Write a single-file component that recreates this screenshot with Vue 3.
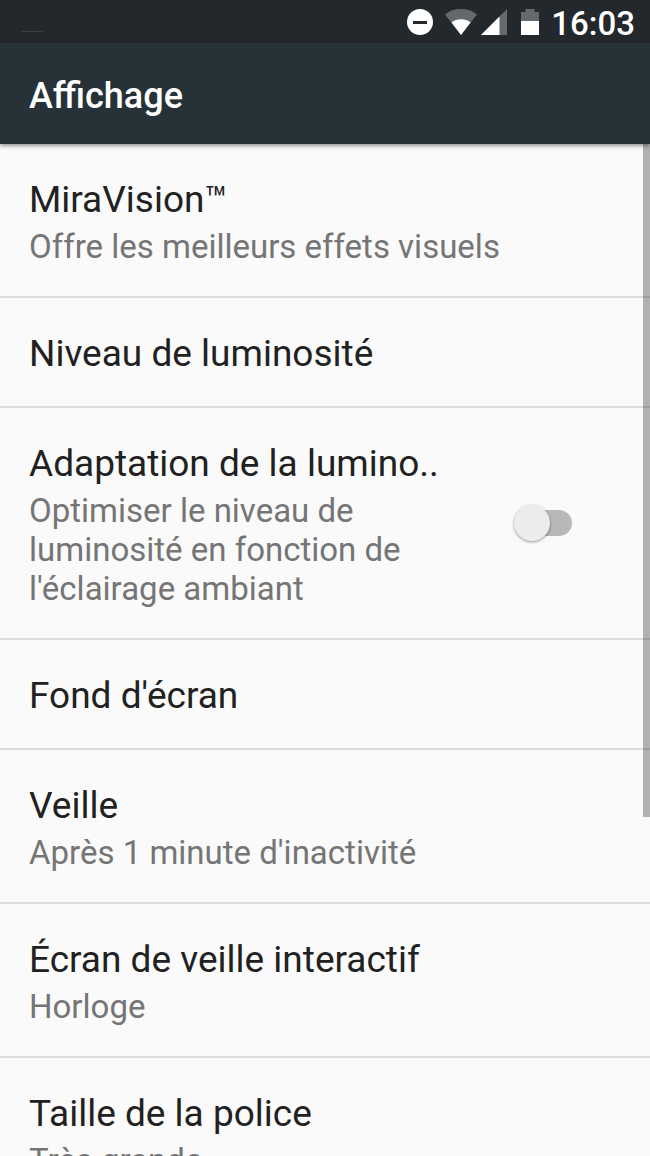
<script setup>
import { ref } from 'vue'

const adaptive = ref(false)

const items = [
  { title: 'MiraVision™', summary: 'Offre les meilleurs effets visuels' },
  { title: 'Niveau de luminosité' },
  {
    title: 'Adaptation de la lumino..',
    summary: "Optimiser le niveau de luminosité en fonction de l'éclairage ambiant",
    toggle: true,
  },
  { title: "Fond d'écran" },
  { title: 'Veille', summary: "Après 1 minute d'inactivité" },
  { title: 'Écran de veille interactif', summary: 'Horloge' },
  { title: 'Taille de la police', summary: 'Très grande' },
]
</script>
<template>
  <div class="screen">
    <div class="status-bar">
      <svg class="notification" viewBox="0 0 22 26">
        <path d="M0 22.500H21V20.500" fill="none" stroke="#3a4043" />
      </svg>
      <svg class="dnd" viewBox="0 0 26 26">
        <circle cx="13" cy="13" r="13" fill="#fff" />
        <rect x="6" y="12" width="14" height="3" fill="#22282c" />
      </svg>
      <svg class="wifi" viewBox="0 0 32 26">
        <path d="M0 5.5C9-1.8 23-1.8 32 5.5L16 26z" fill="#64696c" />
        <path d="M6.5 13.5C11.5 9.3 20.5 9.3 25.5 13.5L16 26z" fill="#fff" />
      </svg>
      <svg class="signal" viewBox="0 0 26 26">
        <path d="M26 0V26H0z" fill="#64696c" />
        <path d="M18.5 7.5V26H0z" fill="#fff" />
      </svg>
      <svg class="battery" viewBox="0 0 18 26">
        <path d="M0 3H4.5V0H13.5V3H18V12H0z" fill="#64696c" />
        <path d="M0 12H18V26H0z" fill="#fff" />
      </svg>
      <span class="clock">16:03</span>
    </div>
    <header class="app-bar">
      <h1>Affichage</h1>
    </header>
    <main class="content">
      <ul>
        <li v-for="item in items" :key="item.title">
          <component :is="item.toggle ? 'label' : 'button'" class="row">
            <span class="text">
              <span class="title">{{ item.title }}</span>
              <span v-if="item.summary" class="summary">{{ item.summary }}</span>
            </span>
            <input v-if="item.toggle" v-model="adaptive" class="switch" type="checkbox" />
          </component>
        </li>
      </ul>
      <div class="scroll-thumb"></div>
    </main>
  </div>
</template>
<style>
body {
  margin: 0;
  background-color: #fafafa;
}
</style>
<style scoped>
.screen {
  display: flex;
  flex-direction: column;
  height: 100vh;
  overflow: hidden;
  background-color: #fafafa;
  font-family: Roboto, sans-serif;
}
.status-bar {
  display: flex;
  flex-shrink: 0;
  align-items: center;
  height: 43px;
  padding: 0 15px 0 22px;
  background-color: #22282c;
}
.status-bar svg {
  height: 26px;
}
.notification {
  width: 22px;
  margin-right: auto;
}
.dnd {
  width: 26px;
  margin-right: 12px;
}
.wifi {
  width: 32px;
  margin-right: 4px;
}
.signal {
  width: 26px;
  margin-right: 14px;
}
.battery {
  width: 18px;
  margin-right: 12px;
}
.clock {
  padding-top: 4px;
  color: #fff;
  font-size: 33px;
  font-weight: 500;
  line-height: 39px;
}
.app-bar {
  z-index: 1;
  display: flex;
  flex-shrink: 0;
  align-items: center;
  height: 101px;
  padding: 0 29px;
  background-color: #263238;
  box-shadow: 0 2px 4px rgba(0, 0, 0, 0.4);
}
h1 {
  margin: 0;
  padding-top: 4px;
  color: #fff;
  font-size: 36px;
  font-weight: 500;
  line-height: 44px;
}
.content {
  position: relative;
  flex: 1;
  min-height: 0;
  overflow: hidden;
}
ul {
  margin: 0;
  padding: 0;
  list-style: none;
}
li {
  border-bottom: 2px solid #dcdcdc;
}
.row {
  display: flex;
  justify-content: space-between;
  align-items: center;
  width: 100%;
  box-sizing: border-box;
  padding: 30px 78px 30px 29px;
  border: 0;
  background: none;
  font-family: inherit;
  text-align: left;
}
.text {
  display: flex;
  flex-direction: column;
  max-width: 480px;
  padding-top: 4px;
}
label .text {
  max-width: 420px;
}
.title {
  color: #212121;
  font-size: 37px;
  line-height: 44px;
  white-space: nowrap;
}
.summary {
  margin-top: 5px;
  color: #757575;
  font-size: 33px;
  line-height: 39px;
}
.switch {
  display: grid;
  align-items: center;
  width: 58px;
  height: 38px;
  margin: 0;
  appearance: none;
}
.switch::before,
.switch::after {
  grid-area: 1 / 1;
  content: '';
}
.switch::before {
  height: 26px;
  margin-left: 6px;
  border-radius: 13px;
  background-color: #b8b8b8;
}
.switch::after {
  width: 36px;
  height: 36px;
  border-radius: 50%;
  background-color: #ececec;
  box-shadow: 0 1px 3px rgba(0, 0, 0, 0.4);
}
.switch:checked::after {
  justify-self: end;
}
.scroll-thumb {
  position: absolute;
  top: 0;
  right: 0;
  width: 7px;
  height: 66.5%;
  background-color: rgba(0, 0, 0, 0.29);
}
</style>
